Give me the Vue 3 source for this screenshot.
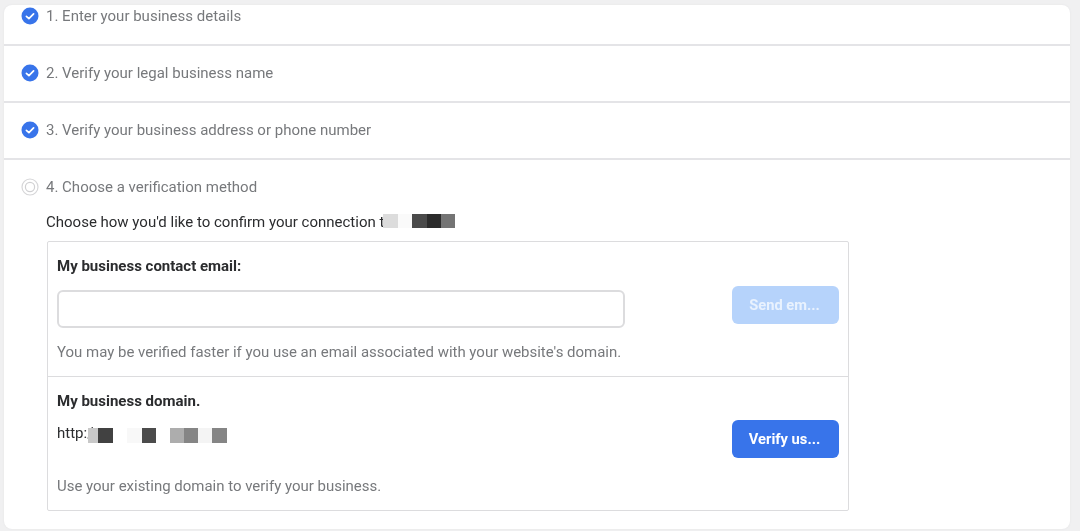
<script setup>
const steps = [
  '1. Enter your business details',
  '2. Verify your legal business name',
  '3. Verify your business address or phone number'
]
const mosaicA = [
  { c: '#dcdcdc', w: 15 }, { c: '#fafafa', w: 14 },
  { c: '#4a4a4a', w: 15 }, { c: '#2b2b2b', w: 14 }, { c: '#747474', w: 14 }
]
const mosaicB = [
  { c: '#c8c8c8', w: 10 }, { c: '#414141', w: 15 }, { c: '#ffffff', w: 14 }, { c: '#f8f8f8', w: 15 },
  { c: '#4b4b4b', w: 14 }, { c: '#ffffff', w: 14 }, { c: '#adadad', w: 14 }, { c: '#858585', w: 14 },
  { c: '#f4f4f4', w: 14 }, { c: '#858585', w: 15 }
]
</script>

<template>
  <div class="page">
    <div class="card">
      <div v-for="(s, i) in steps" :key="s" class="step" :class="{ first: i === 0 }">
        <svg class="ico" width="18" height="18" viewBox="0 0 18 18">
          <circle cx="9" cy="9" r="8.5" fill="#3874ea" />
          <path d="M5.4 9.3 L7.9 11.7 L12.6 6.8" fill="none" stroke="#fff" stroke-width="1.7" stroke-linecap="round" stroke-linejoin="round" />
        </svg>
        <span class="label">{{ s }}</span>
      </div>
      <div class="active">
        <div class="active-head">
          <svg class="ico" width="18" height="18" viewBox="0 0 18 18">
            <circle cx="9" cy="9" r="8" fill="none" stroke="#d6d6d8" stroke-width="1.2" />
            <circle cx="9" cy="9" r="4.6" fill="none" stroke="#d0d0d2" stroke-width="1.2" />
          </svg>
          <span class="label">4. Choose a verification method</span>
        </div>
        <div class="intro">
          <span>Choose how you'd like to confirm your connection t</span>
          <div class="mosaic mosaic-a">
            <i v-for="(m, i) in mosaicA" :key="i" :style="{ background: m.c, width: m.w + 'px' }"></i>
          </div>
        </div>
        <div class="box">
          <section class="opt opt-email">
            <div class="opt-main">
              <h4>My business contact email:</h4>
              <div class="input"></div>
              <p>You may be verified faster if you use an email associated with your website's domain.</p>
            </div>
            <button class="btn disabled">Send em...</button>
          </section>
          <section class="opt opt-domain">
            <div class="opt-main">
              <h4>My business domain.</h4>
              <div class="url">
                <span>http:/</span>
                <div class="mosaic mosaic-b">
                  <i v-for="(m, i) in mosaicB" :key="i" :style="{ background: m.c, width: m.w + 'px' }"></i>
                </div>
              </div>
              <p>Use your existing domain to verify your business.</p>
            </div>
            <button class="btn">Verify us...</button>
          </section>
        </div>
      </div>
    </div>
  </div>
</template>

<style>
html, body { margin: 0; background: #f0f0f1; }
</style>

<style scoped>
.page {
  height: 531px;
  box-sizing: border-box;
  padding: 5px 10px 2px 4px;
  background: #f0f0f1;
  font-family: Roboto, "Liberation Sans", sans-serif;
  overflow: hidden;
  filter: blur(0.4px);
}
.card {
  height: 524px;
  background: #fff;
  border-radius: 8px;
  overflow: hidden;
  box-shadow: 0 0 2px #e2e2e4;
}
.step {
  height: 53px;
  display: flex;
  align-items: center;
  padding-bottom: 2px;
  padding-left: 17px;
  gap: 7px;
  border-bottom: 2px solid #e4e4e7;
}
.step.first {
  height: 37px;
  align-items: flex-start;
  padding-top: 2px;
  padding-bottom: 0;
}
.ico { flex: none; width: 18px; height: 18px; }
.label {
  font-size: 15px;
  line-height: 18px;
  color: #77797c;
}
.active { padding: 18px 0 0 17px; }
.active-head { display: flex; align-items: center; gap: 7px; height: 18px; }
.intro {
  display: flex;
  align-items: center;
  margin: 17px 0 0 25px;
  height: 18px;
  font-size: 15px;
  line-height: 18px;
  color: #2b2c2e;
}
.mosaic { display: flex; }
.mosaic i { display: block; height: 100%; }
.mosaic-a { height: 14px; margin-top: -2px; margin-left: -1px; }
.box {
  width: 802px;
  height: 270px;
  box-sizing: border-box;
  margin: 10px 0 0 26px;
  border: 1px solid #dcdcde;
  border-radius: 2px;
}
.opt {
  display: flex;
  align-items: flex-start;
  justify-content: space-between;
  padding: 0 9px 0 9px;
  box-sizing: border-box;
}
.opt-email { height: 135px; border-bottom: 1px solid #dcdcde; }
.opt-domain { height: 133px; }
.opt-main { width: 568px; }
h4 {
  margin: 15px 0 0;
  font-size: 15px;
  line-height: 18px;
  font-weight: 700;
  color: #2b2c2e;
}
.input {
  height: 38px;
  box-sizing: border-box;
  margin-top: 15px;
  border: 2px solid #dcdcde;
  border-radius: 6px;
  background: #fff;
}
p {
  margin: 15px 0 0;
  font-size: 14.97px;
  line-height: 18px;
  color: #77797c;
  white-space: nowrap;
}
.url {
  display: flex;
  align-items: flex-start;
  height: 18px;
  margin-top: 14px;
  font-size: 15px;
  line-height: 18px;
  color: #2b2c2e;
}
.mosaic-b { height: 15px; margin-top: 4px; margin-left: -5px; }
.opt-domain p { margin-top: 35px; }
.btn {
  flex: none;
  width: 107px;
  height: 38px;
  border: none;
  border-radius: 6px;
  background: #3874ea;
  color: #fff;
  font-family: inherit;
  font-size: 14.7px;
  font-weight: 700;
  padding: 0 2px 0 0;
}
.opt-email .btn { margin-top: 44px; }
.opt-domain .btn { margin-top: 43px; }
.btn.disabled { background: #b6d3fb; color: #e9f2fe; }
</style>
